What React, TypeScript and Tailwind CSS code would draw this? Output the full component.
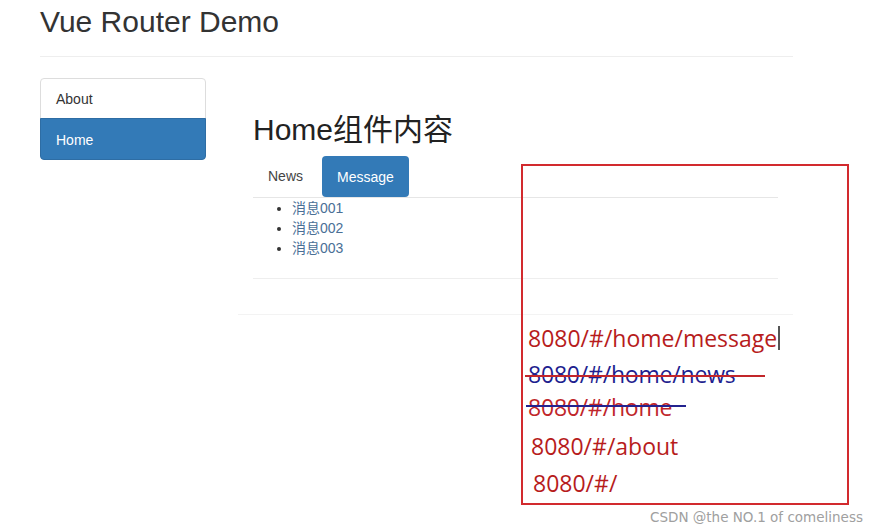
import React from "react";

const sans = { fontFamily: '"Liberation Sans", "Noto Sans CJK SC", Arial, sans-serif' };

export default function App() {
  return (
    <div className="relative w-[878px] h-[532px] bg-white overflow-hidden text-[#333]" style={sans}>
      <div className="w-[753px] ml-[40px]">
        <div className="pt-[5px] pb-[18px] border-b border-[#eee]">
          <h2 className="text-[30px] leading-[33px] font-normal">Vue Router Demo</h2>
        </div>
        <div className="flex mt-[21px] gap-[32px]">
          <div className="w-[166px] flex flex-col text-[14px] leading-[20px]">
            <div className="h-[41px] px-[15px] py-[10px] border border-[#ddd] rounded-t-[4px] bg-white text-[#333]">About</div>
            <div className="h-[42px] px-[15px] py-[11px] border border-[#2e6da4] rounded-b-[4px] bg-[#337ab7] text-white -mt-px">Home</div>
          </div>
          <div className="w-[555px] border-b border-[#f3f3f3]">
            <div className="px-[15px] pb-[35px]">
              <h2 className="text-[30px] leading-[33px] font-normal mt-[35px] mb-[10px] text-[#222]">Home组件内容</h2>
              <div className="border-b border-[#e6e6e6]">
                <div className="flex gap-[4px] text-[14px] leading-[20px]">
                  <div className="px-[15px] py-[10px] text-[#444]">News</div>
                  <div className="px-[15px] py-[11px] h-[41px] bg-[#337ab7] text-white rounded-[4px]">Message</div>
                </div>
              </div>
              <ul className="list-disc pl-[39px] text-[14px] leading-[20px] text-[#4a6f96] marker:text-[#333] pb-[20px] border-b border-[#eee]">
                <li>消息001</li>
                <li>消息002</li>
                <li>消息003</li>
              </ul>
            </div>
          </div>
        </div>
      </div>

      <div
        className="absolute left-[521px] top-[164px] w-[328px] h-[341px] border-2 border-[#d22a2e] flex flex-col text-[23px] leading-[30px] text-[#b71c1c]"
        style={{ fontFamily: '"Open Sans", "Noto Sans", sans-serif' }}
      >
        <div className="mt-[157px] ml-[5px] flex items-center">
          <span>8080/#/home/message</span>
          <span className="w-[2px] h-[24px] bg-[#555] ml-[1px]"></span>
        </div>
        <div className="relative mt-[6px] ml-[5px] text-[#1f1f8f] tracking-[-0.2px]">
          <span>8080/#/home/news</span>
          <span className="absolute left-[-3px] top-[16px] w-[240px] h-[2px] bg-[#c2262a]"></span>
        </div>
        <div className="relative mt-[3px] ml-[5px] text-[#c0262a] tracking-[-0.2px]">
          <span>8080/#/home</span>
          <span className="absolute left-[-2px] top-[13px] w-[160px] h-[2px] bg-[#23238f]"></span>
        </div>
        <div className="mt-[9px] ml-[8px]">8080/#/about</div>
        <div className="mt-[7px] ml-[10px]">8080/#/</div>
      </div>

      <div className="absolute left-[650px] top-[507px] leading-[20px] text-[#a0a0a0] text-[13.5px]" style={{ fontFamily: '"DejaVu Sans", sans-serif' }}>
        CSDN @the NO.1 of comeliness
      </div>
    </div>
  );
}
